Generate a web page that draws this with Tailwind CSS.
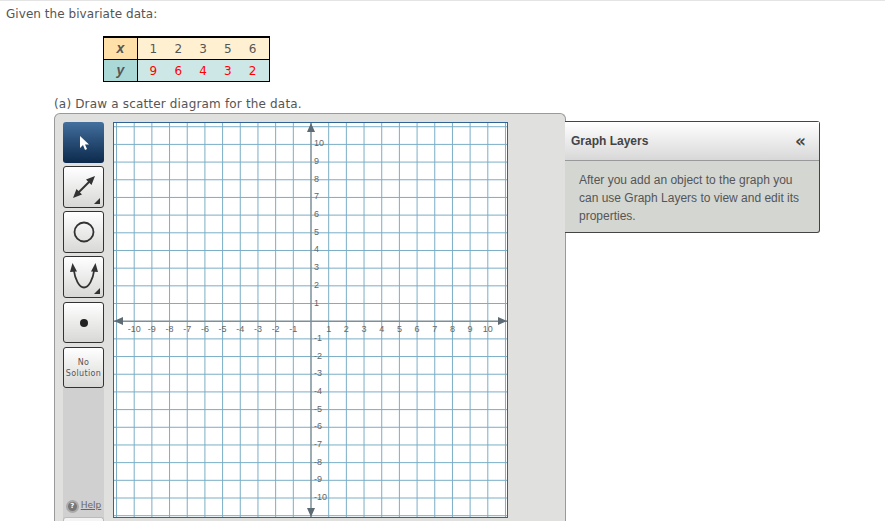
<!DOCTYPE html>
<html lang="en">
<head>
  <meta charset="UTF-8" />
  <title>Scatter diagram</title>
  <script src="https://cdn.jsdelivr.net/npm/@tailwindcss/browser@4"></script>
</head>
<body class="bg-white h-[521px] overflow-hidden font-['DejaVu_Sans',sans-serif] text-[#555] text-[12px]">
  <div class="h-px bg-[#e4e4e4]"></div>
  <p class="pl-[6px] pt-[6px] h-[35px] leading-[15px] tracking-[0.05px]">Given the bivariate data:</p>

  <!-- data table -->
  <div class="ml-[103px] w-[167px] h-[46px] border-t-2 border-b border-x border-black grid grid-cols-[34px_1fr] grid-rows-[21px_22px] text-[12px]">
    <div class="bg-[#ffe0a8] border-r border-black flex items-center justify-center font-bold italic font-['Liberation_Sans',sans-serif] text-[14px]">x</div>
    <div class="bg-[#fff0d2] grid grid-cols-5 items-center justify-items-center pl-[3px] pr-[4px]"><span>1</span><span>2</span><span>3</span><span>5</span><span>6</span></div>
    <div class="bg-[#abd9d7] border-r border-t border-black flex items-center justify-center font-bold italic font-['Liberation_Sans',sans-serif] text-[14px]">y</div>
    <div class="bg-[#cce7e5] border-t border-black grid grid-cols-5 items-center justify-items-center pl-[3px] pr-[4px] text-[#f00]"><span>9</span><span>6</span><span>4</span><span>3</span><span>2</span></div>
  </div>

  <p class="pl-[54px] pt-[15px] h-[31px] leading-[15px] tracking-[0.17px]">(a) Draw a scatter diagram for the data.</p>

  <div class="flex items-start ml-[54px]">
    <!-- graph panel -->
    <div class="w-[512px] h-[420px] shrink-0 bg-[#e0e0de] border border-b-0 border-[#9a9a9a] rounded-t-[6px] flex pl-[8px] pt-[8px] gap-[8px]">
      <div class="w-[42px] h-[412px] flex flex-col items-start gap-[3px]">
        <div class="w-[41px] h-[41px] rounded-[3px] bg-gradient-to-b from-[#43709f] to-[#0c2a4c] flex items-center justify-center">
          <svg width="14" height="18" viewBox="0 0 14 18"><path d="M3 2 L3 14 L6 11 L8 16 L10 15 L8 10.500 L12 10.500 Z" fill="#fff"/></svg>
        </div>
        <div class="relative w-[41px] h-[42px] rounded-[3px] border border-[#333] bg-gradient-to-b from-white to-[#d8d8d6] flex items-center justify-center">
          <svg width="24" height="24" viewBox="0 0 24 24"><path d="M5 19 L19 5" stroke="#333" stroke-width="2"/><path d="M23 1 L19.500 10 L14 4.500 Z M1 23 L4.500 14 L10 19.500 Z" fill="#333"/></svg>
          <span class="absolute right-[3px] bottom-[3px] w-0 h-0 border-l-[6px] border-b-[6px] border-l-transparent border-b-[#333]"></span>
        </div>
        <div class="w-[41px] h-[42px] rounded-[3px] border border-[#333] bg-gradient-to-b from-white to-[#d8d8d6] flex items-center justify-center">
          <svg width="24" height="24" viewBox="0 0 24 24"><circle cx="12" cy="12" r="9.500" fill="none" stroke="#333" stroke-width="1.800"/></svg>
        </div>
        <div class="relative w-[41px] h-[42px] rounded-[3px] border border-[#333] bg-gradient-to-b from-white to-[#d8d8d6] flex items-center justify-center">
          <svg width="28" height="30" viewBox="0 0 28 30"><path d="M3.800 8 C5 17 9 25.500 14 25.500 C19 25.500 23 17 24.200 8" fill="none" stroke="#333" stroke-width="1.800"/><path d="M2.500 1 L7 9.500 L0 10 Z M25.500 1 L28 10 L21 9.500 Z" fill="#333"/></svg>
          <span class="absolute right-[3px] bottom-[3px] w-0 h-0 border-l-[6px] border-b-[6px] border-l-transparent border-b-[#333]"></span>
        </div>
        <div class="mt-px w-[41px] h-[41px] rounded-[3px] border border-[#333] bg-gradient-to-b from-white to-[#d8d8d6] flex items-center justify-center">
          <span class="w-[8px] h-[8px] rounded-full bg-[#222]"></span>
        </div>
        <div class="mt-px w-[41px] h-[41px] rounded-[3px] border border-[#333] bg-gradient-to-b from-white to-[#d8d8d6] flex items-center justify-center text-center text-[8px] leading-[11px] tracking-[0.35px]">No<br>Solution</div>
        <div class="w-[41px] flex-1 bg-[#d0d0d0] -mt-[3px] flex flex-col items-center justify-end">
          <div class="flex items-center gap-[2px] h-[14px] mb-[4px] text-[9px] text-[#666]">
            <span class="w-[13px] h-[13px] rounded-full bg-[#777] border-2 border-[#aaa] text-white text-[7px] font-bold leading-[9px] text-center">?</span>
            <span class="underline">Help</span>
          </div>
          <div class="w-[41px] h-[17px] rounded-t-[3px] border border-b-0 border-[#bbb] bg-[#f4f4f4]"></div>
        </div>
      </div>

      <!-- coordinate grid -->
      <div class="w-[395px] h-[396px] bg-white border border-[#2f6496]">
        <svg id="graph" width="393" height="394" viewBox="114 122 393 394" class="block font-['Liberation_Sans',sans-serif]"></svg>
      </div>
    </div>

    <!-- graph layers panel -->
    <div class="w-[255px] h-[112px] mt-[8px] -ml-px shrink-0 border border-l-0 border-[#444] rounded-r-[3px] bg-[#d4d6d2] font-['Liberation_Sans',sans-serif]">
      <div class="h-[39px] border-b border-[#999] bg-gradient-to-b from-white to-[#d8d8d8] flex items-center justify-between pl-[6px] pr-[13px] font-bold text-[#444] text-[12px]">
        <span>Graph Layers</span><span class="text-[17px] leading-none font-['DejaVu_Sans',sans-serif]">«</span>
      </div>
      <p class="pl-[14px] pr-[12px] pt-[10px] leading-[18px] text-[12px] text-[#555]">After you add an object to the graph you can use Graph Layers to view and edit its properties.</p>
    </div>
  </div>

  <script>
    // draws the grid, axes and tick numbers
    const svg = document.getElementById('graph');
    const cx = 311, cy = 320.2, step = 17.68;
    let out = '';
    for (let k = -11; k <= 11; k++) {
      const x = cx + k * step, y = cy + k * step;
      if (k !== 0) {
        out += `<line x1="${x}" x2="${x}" y1="122" y2="516" stroke="#7aaec6" stroke-width="1"/>`;
        out += `<line x1="114" x2="507" y1="${y}" y2="${y}" stroke="#7aaec6" stroke-width="1"/>`;
      }
    }
    out += `<line x1="${cx}" x2="${cx}" y1="122" y2="516" stroke="#7d8f9a" stroke-width="1.5"/>`;
    out += `<line x1="114" x2="507" y1="${cy}" y2="${cy}" stroke="#7d8f9a" stroke-width="1.5"/>`;
    out += `<path d="M311 122 L315 131 L307 131 Z M311 516 L315 507 L307 507 Z M114 320 L123 316 L123 324 Z M507 320 L498 316 L498 324 Z" fill="#5d6b74"/>`;
    for (let k = 1; k <= 10; k++) {
      out += `<text x="${cx + k * step}" y="${cy + 11}" font-size="9" fill="#666" text-anchor="middle">${k}</text>`;
      out += `<text x="${cx - k * step}" y="${cy + 11}" font-size="9" fill="#666" text-anchor="middle">-${k}</text>`;
      out += `<text x="${cx + 3}" y="${cy - k * step + 2}" font-size="9" fill="#666">${k}</text>`;
      out += `<text x="${cx + 3}" y="${cy + k * step + 2}" font-size="9" fill="#666">-${k}</text>`;
    }
    svg.innerHTML = out;
  </script>
</body>
</html>
